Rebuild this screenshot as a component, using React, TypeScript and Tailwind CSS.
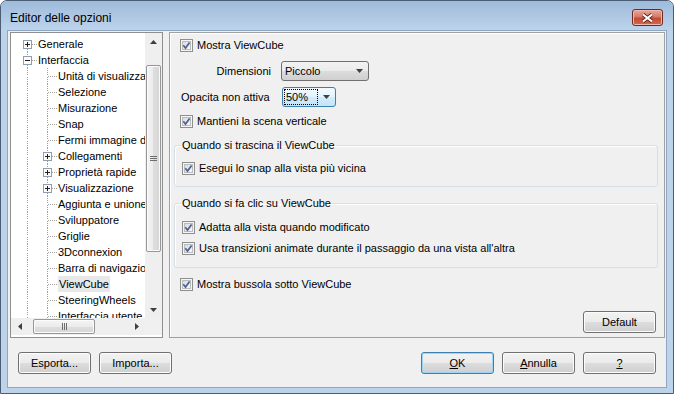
const F = "font-['Liberation_Sans',Arial,sans-serif]";

type CellSpec = { up?: boolean; down?: boolean; right?: boolean; box?: "+" | "-" };

function Cell({ up, down, right = true, box }: CellSpec) {
  const dot = { stroke: "#a0a0a0", strokeDasharray: "1 1" };
  return (
    <svg width="20" height="16" className="shrink-0">
      {up && <line x1="10.5" y1="0" x2="10.5" y2={box ? 4 : 8} {...dot} />}
      {down && <line x1="10.5" y1={box ? 13 : 9} x2="10.5" y2="16" {...dot} />}
      {right && <line x1={box ? 15 : 11} y1="8.5" x2="20" y2="8.5" {...dot} />}
      {box && (
        <g>
          <rect x="6.5" y="4.5" width="8" height="8" fill="#fcfcfc" stroke="#8f9eb0" />
          <line x1="8" y1="8.5" x2="13" y2="8.5" stroke="#1e1e1e" />
          {box === "+" && <line x1="10.5" y1="6" x2="10.5" y2="11" stroke="#1e1e1e" />}
        </g>
      )}
    </svg>
  );
}

const pipe: CellSpec = { up: true, down: true, right: false };
const tee: CellSpec = { up: true, down: true };

const rows: { label: string; cells: CellSpec[]; sel?: boolean }[] = [
  { label: "Generale", cells: [{ down: true, box: "+" }] },
  { label: "Interfaccia", cells: [{ up: true, down: true, box: "-" }] },
  { label: "Unità di visualizzazione", cells: [pipe, tee] },
  { label: "Selezione", cells: [pipe, tee] },
  { label: "Misurazione", cells: [pipe, tee] },
  { label: "Snap", cells: [pipe, tee] },
  { label: "Fermi immagine di sezione", cells: [pipe, tee] },
  { label: "Collegamenti", cells: [pipe, { ...tee, box: "+" }] },
  { label: "Proprietà rapide", cells: [pipe, { ...tee, box: "+" }] },
  { label: "Visualizzazione", cells: [pipe, { ...tee, box: "+" }] },
  { label: "Aggiunta e unione", cells: [pipe, tee] },
  { label: "Sviluppatore", cells: [pipe, tee] },
  { label: "Griglie", cells: [pipe, tee] },
  { label: "3Dconnexion", cells: [pipe, tee] },
  { label: "Barra di navigazione", cells: [pipe, tee] },
  { label: "ViewCube", cells: [pipe, tee], sel: true },
  { label: "SteeringWheels", cells: [pipe, tee] },
  { label: "Interfaccia utente", cells: [pipe, tee] },
];

function Tri({ dir }: { dir: "up" | "down" | "left" | "right" }) {
  const d = {
    up: "M3.5 0L7 4H0z",
    down: "M0 0h7L3.5 4z",
    left: "M4 0v7L0 3.5z",
    right: "M0 0l4 3.5L0 7z",
  }[dir];
  const vertical = dir === "up" || dir === "down";
  return (
    <svg width={vertical ? 7 : 4} height={vertical ? 4 : 7}>
      <path d={d} fill="#3f3f3f" />
    </svg>
  );
}

function CheckBox() {
  return (
    <svg width="13" height="13" className="shrink-0">
      <defs>
        <linearGradient id="cbin" x1="0" y1="0" x2="1" y2="1">
          <stop offset="0" stopColor="#d8d8d8" />
          <stop offset="1" stopColor="#fafafa" />
        </linearGradient>
      </defs>
      <rect x="0.5" y="0.5" width="12" height="12" fill="#f5f5f5" stroke="#8e8f8f" />
      <rect x="2.5" y="2.5" width="8" height="8" fill="url(#cbin)" stroke="#bcbcbc" />
      <path d="M3.3 6.3L5.5 9L9.6 3.4" fill="none" stroke="#4b6296" strokeWidth="1.7" />
    </svg>
  );
}

function Check({ label, className = "" }: { label: string; className?: string }) {
  return (
    <div className={`flex h-[16px] items-center gap-[4px] ${className}`}>
      <CheckBox />
      <span>{label}</span>
    </div>
  );
}

function Btn({ children, focus = false, className = "" }: { children: React.ReactNode; focus?: boolean; className?: string }) {
  return (
    <div
      className={`flex h-[22px] w-[73px] shrink-0 items-center justify-center rounded-[3px] border bg-[linear-gradient(180deg,#f2f2f2,#ebebeb_50%,#dddddd_50%,#cfcfcf)] ${
        focus ? "border-[#3c7fb1] shadow-[inset_0_0_0_1px_#9fd5f3]" : "border-[#707070] shadow-[inset_0_0_0_1px_#fcfcfc]"
      } ${className}`}
    >
      {children}
    </div>
  );
}

function CloseBtn() {
  return (
    <div className="mt-[8px] flex h-[17px] w-[31px] items-center justify-center rounded-[3px] border border-[#6e2a22] bg-[linear-gradient(180deg,#e9a99a,#d57a69_45%,#c44a35_55%,#cf6a52)] shadow-[inset_0_0_0_1px_#f0b7aa]">
      <svg width="13" height="10">
        <path d="M2 1.5L11 8.5M11 1.5L2 8.5" stroke="#5e2219" strokeWidth="3.8" />
        <path d="M2 1.5L11 8.5M11 1.5L2 8.5" stroke="#ffffff" strokeWidth="2.2" />
      </svg>
    </div>
  );
}

function Tree() {
  return (
    <div className="flex h-[306px] w-[153px] shrink-0 flex-col border border-[#8e8f8f] bg-white">
      <div className="flex h-[285px]">
        <div className="w-[134px] overflow-hidden pl-[6px] pt-[3px]">
          {rows.map((r) => (
            <div key={r.label} className="flex h-[16px] items-center whitespace-nowrap">
              {r.cells.map((c, i) => (
                <Cell key={i} {...c} />
              ))}
              <span className={`ml-[1px] leading-[16px] ${r.sel ? "bg-[#e8e8e8] px-[1px]" : ""}`}>{r.label}</span>
            </div>
          ))}
        </div>
        <div className="flex flex-1 flex-col bg-[#efefef]">
          <div className="flex h-[17px] items-center justify-center">
            <Tri dir="up" />
          </div>
          <div className="h-[15px]" />
          <div className="mx-[1px] flex h-[187px] items-center justify-center rounded-[2px] border border-[#979797] bg-[linear-gradient(90deg,#f5f5f5,#ebebeb_50%,#dedede_50%,#d6d6d6)] shadow-[inset_0_0_0_1px_#fbfbfb]">
            <svg width="7" height="7">
              <path d="M0 1.5h7M0 3.5h7M0 5.5h7" stroke="#6e6e6e" />
            </svg>
          </div>
          <div className="flex-1" />
          <div className="flex h-[17px] items-center justify-center">
            <Tri dir="down" />
          </div>
        </div>
      </div>
      <div className="flex h-[17px]">
        <div className="flex w-[134px] items-stretch bg-[#efefef]">
          <div className="flex w-[17px] items-center justify-center">
            <Tri dir="left" />
          </div>
          <div className="w-[5px]" />
          <div className="my-[1px] flex w-[62px] items-center justify-center rounded-[2px] border border-[#979797] bg-[linear-gradient(180deg,#f5f5f5,#ebebeb_50%,#dedede_50%,#d6d6d6)] shadow-[inset_0_0_0_1px_#fbfbfb]">
            <svg width="7" height="7">
              <path d="M1.5 0v7M3.5 0v7M5.5 0v7" stroke="#6e6e6e" />
            </svg>
          </div>
          <div className="flex-1" />
          <div className="flex w-[17px] items-center justify-center">
            <Tri dir="right" />
          </div>
        </div>
        <div className="flex-1 bg-[#f0f0f0]" />
      </div>
    </div>
  );
}

function Combo({ children, className, focus = false }: { children: React.ReactNode; className: string; focus?: boolean }) {
  return (
    <div
      className={`flex h-[20px] items-center rounded-[3px] border ${
        focus
          ? "border-[#3c7fb1] bg-[linear-gradient(180deg,#f1f9fe,#e4f4fd_50%,#d0ecfc_50%,#c4e5f8)]"
          : "border-[#707070] bg-[linear-gradient(180deg,#f2f2f2,#ebebeb_50%,#dddddd_50%,#cfcfcf)]"
      } ${className}`}
    >
      <div className="flex-1">{children}</div>
      <div className="mr-[5px] flex">
        <Tri dir="down" />
      </div>
    </div>
  );
}

function Options() {
  return (
    <div className="flex h-[306px] flex-1 flex-col border border-[#a0a0a0] shadow-[inset_1px_1px_0_#fff]">
      <Check label="Mostra ViewCube" className="mt-[4px] pl-[10px]" />
      <div className="mt-[8px] flex h-[20px] items-center">
        <div className="w-[101px] text-right">Dimensioni</div>
        <Combo className="ml-[10px] w-[88px]">
          <span className="pl-[3px]">Piccolo</span>
        </Combo>
      </div>
      <div className="mt-[6px] flex h-[20px] items-center">
        <div className="w-[112px] whitespace-nowrap pl-[11px]">Opacita non attiva</div>
        <Combo className="w-[54px]" focus>
          <div className="ml-[1px] flex h-[16px] w-[34px] items-center border border-dotted border-black pl-[1px]">50%</div>
        </Combo>
      </div>
      <Check label="Mantieni la scena verticale" className="mt-[6px] pl-[10px]" />
      <fieldset className="ml-[4px] mr-[6px] mt-[10px] rounded-[3px] border border-[#d5dfe5] pb-[10px] shadow-[inset_1px_1px_0_#fff]">
        <legend className="ml-[6px] px-[1px] leading-[13px]">Quando si trascina il ViewCube</legend>
        <Check label="Esegui lo snap alla vista più vicina" className="mt-[8px] pl-[7px]" />
      </fieldset>
      <fieldset className="ml-[4px] mr-[6px] mt-[10px] rounded-[3px] border border-[#d5dfe5] pb-[11px] shadow-[inset_1px_1px_0_#fff]">
        <legend className="ml-[6px] px-[1px] leading-[13px]">Quando si fa clic su ViewCube</legend>
        <Check label="Adatta alla vista quando modificato" className="mt-[9px] pl-[7px]" />
        <Check label="Usa transizioni animate durante il passaggio da una vista all'altra" className="mt-[5px] pl-[7px]" />
      </fieldset>
      <Check label="Mostra bussola sotto ViewCube" className="mt-[8px] pl-[10px]" />
      <Btn className="mb-[4px] mr-[8px] mt-auto self-end">Default</Btn>
    </div>
  );
}

export default function App() {
  return (
    <div className={`flex h-[394px] w-[674px] flex-col overflow-hidden rounded-t-[7px] border border-[#4a5d75] bg-[#bdd3ea] text-[11px] leading-[14px] text-black ${F}`}>
      <div className="flex h-[29px] shrink-0 items-start justify-between bg-gradient-to-b from-[#9fbbdb] to-[#bcd3eb] pl-[9px] pr-[10px]">
        <span className="mt-[10px] text-[12px] leading-[14px]">Editor delle opzioni</span>
        <CloseBtn />
      </div>
      <div className="mx-[6px] flex h-[358px] flex-col border border-[#8ea6c2] bg-[#f0f0f0]">
        <div className="ml-[2px] mr-[1px] mt-[1px] flex gap-[6px]">
          <Tree />
          <Options />
        </div>
        <div className="mt-[14px] flex items-center pl-[10px] pr-[10px]">
          <Btn>Esporta...</Btn>
          <Btn className="ml-[8px]">Importa...</Btn>
          <div className="flex-1" />
          <Btn focus>
            <span className="underline">O</span>K
          </Btn>
          <Btn className="ml-[8px]">
            <span className="underline">A</span>nnulla
          </Btn>
          <Btn className="ml-[8px]">
            <span className="underline">?</span>
          </Btn>
        </div>
      </div>
    </div>
  );
}
